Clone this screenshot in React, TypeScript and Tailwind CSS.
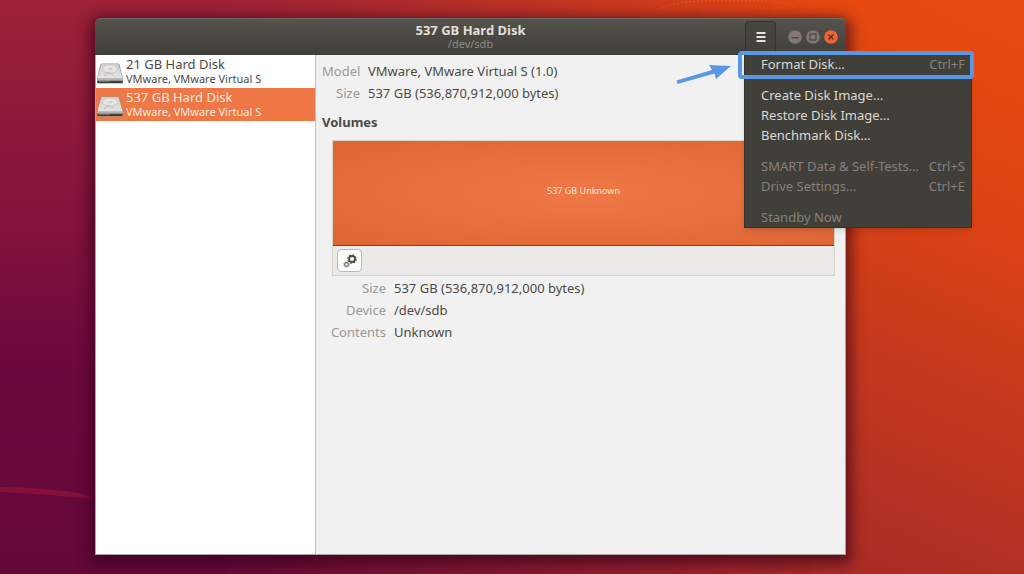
import { clsx } from "clsx";

const disks = [
  { name: "21 GB Hard Disk", vendor: "VMware, VMware Virtual S", selected: false },
  { name: "537 GB Hard Disk", vendor: "VMware, VMware Virtual S", selected: true },
];

const menuGroups = [
  [{ label: "Format Disk…", keys: "Ctrl+F", disabled: false }],
  [
    { label: "Create Disk Image…", keys: "", disabled: false },
    { label: "Restore Disk Image…", keys: "", disabled: false },
    { label: "Benchmark Disk…", keys: "", disabled: false },
  ],
  [
    { label: "SMART Data & Self-Tests…", keys: "Ctrl+S", disabled: true },
    { label: "Drive Settings…", keys: "Ctrl+E", disabled: true },
  ],
  [{ label: "Standby Now", keys: "", disabled: true }],
];

function Wallpaper() {
  return (
    <svg
      className="absolute inset-0 h-full w-full"
      viewBox="0 0 1024 574"
      preserveAspectRatio="none"
      aria-hidden="true"
    >
      <defs>
        <linearGradient id="left" x1="0" y1="0" x2="0" y2="1">
          <stop offset="0" stopColor="#9c2137" />
          <stop offset="0.35" stopColor="#85143c" />
          <stop offset="0.65" stopColor="#6c083d" />
          <stop offset="1" stopColor="#64083a" />
        </linearGradient>
        <linearGradient id="right" gradientUnits="userSpaceOnUse" x1="1010" y1="30" x2="780" y2="560">
          <stop offset="0" stopColor="#e94b10" />
          <stop offset="0.35" stopColor="#d94215" />
          <stop offset="0.7" stopColor="#bd3520" />
          <stop offset="1" stopColor="#a82a26" />
        </linearGradient>
        <linearGradient id="fade" x1="0" y1="0" x2="1" y2="0">
          <stop offset="0.2" stopColor="#fff" stopOpacity="0" />
          <stop offset="0.8" stopColor="#fff" />
        </linearGradient>
        <mask id="fadeMask">
          <rect width="1024" height="574" fill="url(#fade)" />
        </mask>
      </defs>
      <rect width="1024" height="574" fill="url(#left)" />
      <rect width="1024" height="574" fill="url(#right)" mask="url(#fadeMask)" />
      <path d="M0 487q45 0 84 7l10 5q-40-4-94-7z" fill="#85103c" />
      <path
        d="M662 8Q675 2 700 1h70q16 1 26 7"
        fill="none"
        stroke="#e8642a"
        strokeDasharray="2 2"
        opacity=".7"
      />
    </svg>
  );
}

function DriveIcon() {
  return (
    <svg className="h-8 w-7 shrink-0" viewBox="0 0 28 32" aria-hidden="true">
      <defs>
        <linearGradient id="driveTop" x1="0" y1="0" x2="0" y2="1">
          <stop offset="0" stopColor="#d0cfcd" />
          <stop offset="1" stopColor="#e4e3e1" />
        </linearGradient>
      </defs>
      <path
        d="M4.500 8.500Q4.800 7.500 6 7.500h16q1.200 0 1.500 1L27 22.500v4q0 1-1 1H2q-1 0-1-1v-4z"
        fill="#96948f"
      />
      <path d="M5.200 9Q5.500 8 6.500 8h15q1 0 1.300 1L26.500 22.500h-25z" fill="url(#driveTop)" />
      <ellipse cx="14" cy="13" rx="7.500" ry="4.300" fill="#e6e5e3" stroke="#c3c1be" strokeWidth=".8" />
      <ellipse cx="14.500" cy="13" rx="2" ry="1.200" fill="#d0cecb" />
      <path d="M8 20l4-4 5 3" stroke="#bbb9b6" fill="none" />
      <path d="M1.200 23.500h25.600" stroke="#b4b2af" />
      <path d="M1.500 26h25" stroke="#3f3d3a" strokeWidth="2" />
      <path d="M3 25.500h11" stroke="#6f6d69" />
    </svg>
  );
}

function GearsIcon() {
  return (
    <svg className="h-4 w-4" viewBox="0 0 16 16" fill="none" stroke="#4c4a46" aria-hidden="true">
      <circle cx="10" cy="6" r="3" strokeWidth="1.800" />
      <circle cx="10" cy="6" r="4.200" strokeWidth="1.200" strokeDasharray="1.500 1.799" />
      <circle cx="4.500" cy="11.500" r="1.900" strokeWidth="1.100" stroke="#6a6864" />
      <circle cx="4.500" cy="11.500" r="2.700" strokeWidth=".8" strokeDasharray="1 1.120" stroke="#6a6864" />
    </svg>
  );
}

function TitleBar() {
  return (
    <header className="relative flex h-[37px] items-center justify-end rounded-t-md border-t border-[#6b6963] bg-linear-to-b from-[#55534c] to-[#3f3e39] pr-2">
      <div className="absolute inset-x-0 top-1 text-center">
        <h1 className="text-[13px] leading-[14px] font-bold text-[#e3dfd8]">537 GB Hard Disk</h1>
        <p className="text-[11px] leading-[14px] text-[#8e8b83]">/dev/sdb</p>
      </div>
      <button
        aria-label="Disk menu"
        className="relative mr-3 flex h-[34px] w-[31px] items-center justify-center self-end rounded-t border border-b-0 border-[#34332f] bg-linear-to-b from-[#474640] to-[#403f3a] pb-1"
      >
        <svg className="h-3 w-3" viewBox="0 0 12 12" stroke="#e6e2dc" strokeWidth="2" aria-hidden="true">
          <path d="M1.500 2h9M1.500 6h9M1.500 10h9" />
        </svg>
      </button>
      <div className="relative flex gap-1">
        <button aria-label="Minimize" className="h-3.5 w-3.5">
          <svg viewBox="0 0 14 14" aria-hidden="true">
            <circle cx="7" cy="7" r="6.800" fill="#817876" />
            <path d="M3.500 7.800h7" stroke="#46443f" strokeWidth="1.300" />
          </svg>
        </button>
        <button aria-label="Maximize" className="h-3.5 w-3.5">
          <svg viewBox="0 0 14 14" aria-hidden="true">
            <circle cx="7" cy="7" r="6.800" fill="#817876" />
            <rect x="4" y="4" width="6" height="6" fill="none" stroke="#46443f" strokeWidth="1.200" />
          </svg>
        </button>
        <button aria-label="Close" className="h-3.5 w-3.5">
          <svg viewBox="0 0 14 14" aria-hidden="true">
            <circle cx="7" cy="7" r="6.800" fill="#f0642f" />
            <path d="M4.500 4.500l5 5M9.500 4.500l-5 5" stroke="#47322a" strokeWidth="1.300" />
          </svg>
        </button>
      </div>
    </header>
  );
}

function DiskList() {
  return (
    <nav aria-label="Disks" className="w-[220px] shrink-0 border-r border-[#c2beb9] bg-white">
      {disks.map((disk) => (
        <button
          key={disk.name}
          className={clsx(
            "flex h-[33px] w-full items-center gap-0.5 text-left",
            disk.selected ? "bg-[#f07746] text-[#fbe9df]" : "text-[#4c4a47]",
          )}
        >
          <DriveIcon />
          <span className="whitespace-nowrap">
            <span className="block text-[13px] leading-[15px]">{disk.name}</span>
            <span className="block text-[11px] leading-[14px]">{disk.vendor}</span>
          </span>
        </button>
      ))}
    </nav>
  );
}

function Volumes() {
  return (
    <section className="mt-2">
      <h2 className="text-[13px] leading-5 font-bold text-[#4c4a47]">Volumes</h2>
      <div className="mt-2 ml-2.5 border border-[#d8d2ca] bg-[#ebeae8]">
        <div className="flex h-[105px] items-center justify-center border-b border-[#5d4b42] bg-radial from-[#f07746] to-[#df6634] pb-1 text-[9px] text-[#fbe3d6]">
          537 GB Unknown
        </div>
        <div className="px-1 py-[3px]">
          <button
            aria-label="Additional partition options"
            className="flex h-[23px] w-[25px] items-center justify-center rounded border border-[#bdb9b4] bg-[#fcfcfb]"
          >
            <GearsIcon />
          </button>
        </div>
      </div>
    </section>
  );
}

function DiskMenu() {
  return (
    <div
      role="menu"
      className="absolute top-9 right-[-126px] flex w-[228px] flex-col gap-[11px] border border-t-0 border-[#33322e] bg-[#403f3a] text-[13px] leading-5 shadow-md"
    >
      {menuGroups.map((group) => (
        <div key={group[0].label} role="group">
          {group.map((item) => (
            <button
              key={item.label}
              role="menuitem"
              disabled={item.disabled}
              className={clsx(
                "flex h-5 w-full items-center justify-between pr-1.5 pl-4 whitespace-nowrap",
                item.disabled ? "text-[#85807a]" : "text-[#dcd7d0]",
              )}
            >
              <span>{item.label}</span>
              <span className="text-[#85807a]">{item.keys}</span>
            </button>
          ))}
        </div>
      ))}
    </div>
  );
}

function Callout() {
  return (
    <>
      <div className="pointer-events-none absolute top-[33px] right-[-128px] h-7 w-[236px] rounded border-4 border-[#5797e6]" />
      <svg
        className="pointer-events-none absolute top-[45px] right-[115px] h-6 w-14"
        viewBox="0 0 56 24"
        fill="#5797e6"
        aria-hidden="true"
      >
        <path d="M1.500 17.500L37 7 34 2 56 3 41 16 39.500 10.500 2.500 21z" />
      </svg>
    </>
  );
}

export default function App() {
  return (
    <main className="relative min-h-screen overflow-hidden pt-[18px] pr-[178px] pb-[19px] pl-[95px] font-['Noto_Sans','Open_Sans',sans-serif]">
      <Wallpaper />
      <div className="relative flex min-h-[calc(100vh-37px)] flex-col rounded-t-md shadow-[0_4px_14px_5px_rgba(50,0,25,0.65)]">
        <TitleBar />
        <div className="flex flex-1 border border-t-0 border-[#aaa6a3]">
          <DiskList />
          <div className="min-w-0 flex-1 bg-[#f2f1f1] pt-[5px] pr-2.5 pl-1.5 text-[13px] text-[#4c4a47]">
            <dl className="grid grid-cols-[38px_1fr] gap-x-2 leading-[22px]">
              <dt className="text-right text-[#9b9895]">Model</dt>
              <dd>VMware, VMware Virtual S (1.0)</dd>
              <dt className="text-right text-[#9b9895]">Size</dt>
              <dd>537 GB (536,870,912,000 bytes)</dd>
            </dl>
            <Volumes />
            <dl className="mt-px grid grid-cols-[64px_1fr] gap-x-2 leading-[22px]">
              <dt className="text-right text-[#9b9895]">Size</dt>
              <dd>537 GB (536,870,912,000 bytes)</dd>
              <dt className="text-right text-[#9b9895]">Device</dt>
              <dd>/dev/sdb</dd>
              <dt className="text-right text-[#9b9895]">Contents</dt>
              <dd>Unknown</dd>
            </dl>
          </div>
        </div>
        <DiskMenu />
        <Callout />
      </div>
    </main>
  );
}
